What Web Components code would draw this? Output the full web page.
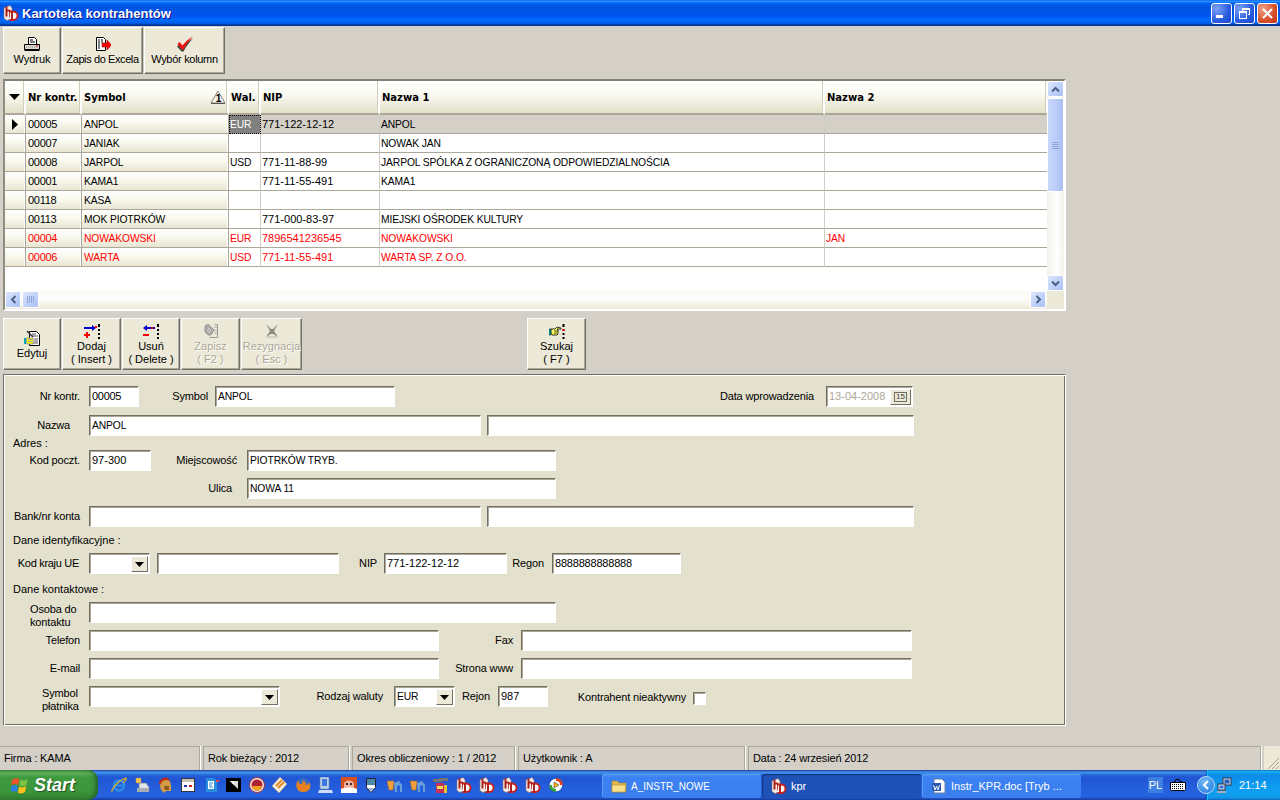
<!DOCTYPE html>
<html lang="pl">
<head>
<meta charset="utf-8">
<title>Kartoteka kontrahentów</title>
<style>
  html, body { margin: 0; height: 100%; overflow: hidden; }
  body { background: #D4D0C8; font: 11px "Liberation Sans", "DejaVu Sans", sans-serif; color: #000; }
</style>
</head>
<body>
<app-window></app-window>
<script>
/* Icons: small inline SVG, keyed by name */
const logo = `<path d="M1 3l6-2.500 2 2.500v10l-5 2.500-3-2z" fill="#f6ece6" stroke="#9a7a70" stroke-width=".6"/><path d="M3.500 1.500v10M3.500 6.500c2-2 3.500-1 3.500 1v5" stroke="#a81c14" stroke-width="1.900" fill="none"/><path d="M7 6.500h3c6 0 6 8.500 0 8.500H6.500" stroke="#cc2018" stroke-width="1.900" fill="#fff"/><path d="M9 6.500V15" stroke="#a81c14" stroke-width="1.900"/>`;
const dots = (x) => `<path d="M${x} 1v3M${x} 6v2M${x} 10v2M${x} 14v2" stroke="#000" stroke-width="2"/>`;
const ICONS = {
  logo,
  printer: `<path d="M4.500 1.500h6l2 2v5h-8z" fill="#fff" stroke="#000"/><path d="M6 4h3M6 6h5" stroke="#000"/><path d="M.5 8.500h15v5H.5z" fill="#d8d8d0" stroke="#000"/><path d="M2 11h12" stroke="#888" stroke-dasharray="1 1"/><path d="M.5 14.500h15" stroke="#000"/><rect x="12" y="9.500" width="2" height="1" fill="#e00"/>`,
  excel: `<path d="M1.500 1.500h7l2 2v11h-9z" fill="#fff" stroke="#000"/><path d="M3 4h2M6 4h2M3 6h2M6 6h2M3 8h2M3 10h2M3 12h2" stroke="#000"/><path d="M7 7h5V4l4.500 5-4.500 5v-3H7z" fill="#f00" stroke="#800" stroke-width=".5"/>`,
  check: `<path d="M0 9l2-2 3 3.500C8 6 12 3 16 1c-3.500 3.500-7 8-9.500 13H4.500z" fill="#000" opacity=".7" transform="translate(0 1.500)"/><path d="M.5 8L2.500 6 5.500 9.500C8.500 5.500 12 2.500 16 .5c-3.500 3.500-7 8-9.500 13H5z" fill="#f01010"/>`,
  edit: `<path d="M5.500 1.500h7l3 3v11h-10z" fill="#fff" stroke="#000"/><path d="M8 4h4M8 6h6M10 9h4M10 11h4M8 13h6" stroke="#555"/><path d="M3 1l6 6" stroke="#333" stroke-width="1.500"/><path d="M2 8h7v6H3z" fill="#ff0" stroke="#888" stroke-width=".8"/><path d="M1 8v6" stroke="#00a8c0" stroke-width="2"/><path d="M4 9.500h4M4 11.500h4" stroke="#999"/>`,
  add: `<path d="M0 5h9" stroke="#00c" stroke-width="2"/><path d="M8 2l4 3-4 3z" fill="#00c"/><path d="M3 9v6M0 12h6" stroke="#f00" stroke-width="2"/><rect x="11" y="3" width="2" height="2" fill="#f00"/>${dots(15)}`,
  del: `<path d="M3 5h9" stroke="#00c" stroke-width="2"/><path d="M4 2L0 5l4 3z" fill="#00c"/><path d="M0 12h6" stroke="#f00" stroke-width="2"/><rect x="8" y="4" width="2" height="2" fill="#f00"/>${dots(15)}`,
  save: `<path d="M11.500 1.500h3v13h-8" fill="none" stroke="#999"/><path d="M2 3l3-2 6 6-3 5H5L2 9z" fill="#aaa" stroke="#777" stroke-width=".6"/><path d="M5 5l3 3M4 7l3 3" stroke="#e0e0e0"/><path d="M11 4h3M11 7h3M11 10h3" stroke="#aaa"/>`,
  cancel: `<path d="M2 1l5 5h2l5-5-4 7 4 6-5-3H7l-5 3 4-6z" fill="#8e8c80"/><path d="M3 14h10" stroke="#bbb"/>`,
  find: `<path d="M0 6h2v6H0z" fill="#00c8d0" stroke="#000" stroke-width=".5"/><path d="M2 6h4l2-2 4 1v1H8l1 1v4l-1 1H3l-1-2z" fill="#ffff60" stroke="#000" stroke-width=".8"/><path d="M5 8h4M5 10h3" stroke="#000" stroke-width=".7"/>${dots(14.500)}<rect x="13.500" y="6" width="2" height="2" fill="#e00"/>`,
  winflag: `<path d="M1 3c2-1.500 4-1.500 6-.5L6 7.500C4 6.500 2 6.500 0 8z" fill="#e8562a"/><path d="M8 3c2 1 4 1 6-.5l-1 5c-2 1.500-4 1.500-6 .5z" fill="#7dc242"/><path d="M0 9c2-1.500 4-1.500 5.800-.5l-1 5c-2-1-4-1-5.800.5z" fill="#2d7fe0"/><path d="M6.800 9c2 1 4 1 6-.5l-1 5c-2 1.500-4 1.500-6 .5z" fill="#fbc31a"/>`,
  ie: `<circle cx="8" cy="8.500" r="5" fill="none" stroke="#2f8fe8" stroke-width="2.400"/><path d="M4 8.500h9" stroke="#2f8fe8" stroke-width="1.800"/><path d="M1 15C0 12 8 3 15 1c1 2-2 4-3 5" fill="none" stroke="#e8b41e" stroke-width="1.200"/>`,
  prn2: `<path d="M2 1h5v5H2z" fill="#f6c64a" stroke="#a87" stroke-width=".5"/><path d="M5 6h7l3 4v4H5z" fill="#dfe3ea" stroke="#778" stroke-width=".7"/><path d="M3 11h12v4H3z" fill="#a8adb8"/>`,
  helmet: `<path d="M3 9c0-5 3-7 6-7s5 3 5 7v5H9l-2 2-3-3z" fill="#d49a44"/><path d="M2 6C3 1 8 0 11 1l2 3C9 2 5 3 3 8z" fill="#c22a10"/><path d="M7 9h5v4H8z" fill="#8a5a20"/>`,
  win: `<rect x="1.500" y="1.500" width="13" height="13" fill="#fff" stroke="#334"/><rect x="2" y="2" width="12" height="3" fill="#c8c4b4"/><rect x="4" y="8" width="3" height="2" fill="#23a"/><rect x="9" y="8" width="3" height="2" fill="#c22"/>`,
  blue: `<path d="M3 1h8l3 3v11H3z" fill="#2b8fe0"/><path d="M5 4h6v8H5z" fill="#fff"/><path d="M6 6h4M6 8h3M6 10h4" stroke="#2b8fe0"/><rect x="13" y="3" width="3" height="2" fill="#e44"/>`,
  black: `<rect x="0" y="1" width="15" height="14" fill="#000"/><path d="M4 4h8v8z" fill="#ddd"/><path d="M4 4h4v4z" fill="#fff"/>`,
  disc: `<circle cx="8" cy="8" r="7.500" fill="#f2e6e6" stroke="#a33"/><circle cx="8" cy="8" r="5.500" fill="#b02030"/><path d="M3 9h10c0 3-2 4.500-5 4.500S3 12 3 9z" fill="#f0a020"/>`,
  diamond: `<path d="M8 0l7 7-8 9-7-7z" fill="#f4f0e0" stroke="#a87" stroke-width=".6"/><path d="M4 9l6-6M6 11l6-6" stroke="#e08a20" stroke-width="2"/>`,
  fox: `<circle cx="8" cy="8" r="7" fill="#3a6cc0"/><path d="M3 3c-3 5-2 12 5 12s9-6 6-10c0 2-1 3-3 3 0-3-2-5-4-4 1 1 1 3-1 3S3 5 3 3z" fill="#e8801e"/>`,
  pc: `<rect x="2" y="0" width="9" height="12" rx="1" fill="#bcd0ec" stroke="#6a88b0" stroke-width=".6"/><rect x="4" y="2" width="5" height="7" fill="#3a7ae0"/><path d="M1 13h13l1 3H0z" fill="#d0dcf0"/>`,
  toon: `<rect x="0" y="0" width="16" height="16" fill="#d8501c"/><path d="M3 7c0-4 9-5 10 0v5H3z" fill="#f0b0a0"/><path d="M0 12c4-2 12-2 16 0v4H0z" fill="#fff"/><circle cx="6" cy="7" r="1" fill="#000"/><circle cx="10" cy="7" r="1" fill="#000"/>`,
  shield: `<path d="M2.500 1.500h9v9l-4.500 5-4.500-5z" fill="#fff" stroke="#223"/><path d="M3 2h8v6H3z" fill="#4a8aa8"/><path d="M4 11h6l-3 3z" fill="#8ad"/>`,
  cups: `<path d="M0 4h7l-1 9H2z" fill="#f0a040" stroke="#a60" stroke-width=".5"/><path d="M7 6c3-2 7-1 8 2v7h-2V9c-1-1-2-1-3 0v6H8z" fill="#6aa0d8"/><path d="M10 4h3l-1 2z" fill="#6aa0d8"/>`,
  tools: `<rect x="3" y="6" width="8" height="10" fill="#c83058"/><rect x="4" y="9" width="6" height="3" fill="#f2dc60"/><path d="M0 2h9v3H0zM6 1h9v3H6z" fill="#777"/><rect x="11" y="8" width="3" height="8" fill="#e6c030"/>`,
  wmp: `<circle cx="8" cy="8" r="7" fill="#fff" stroke="#1a5ac0" stroke-width="1.400"/><path d="M8 1a7 7 0 0 1 7 7h-3a4 4 0 0 0-4-4z" fill="#e04020"/><path d="M1 8a7 7 0 0 0 7 7v-3a4 4 0 0 1-4-4z" fill="#38a038"/><path d="M6 5l5 3-5 3z" fill="#f0b020" stroke="#333" stroke-width=".5"/>`,
  folder: `<path d="M1 3h5l2 2h7v9H1z" fill="#e4b84a" stroke="#a68430" stroke-width=".6"/><path d="M1 7h14l-1 7H1z" fill="#f8e08c" stroke="#b08c30" stroke-width=".6"/>`,
  word: `<path d="M3 1h8l3 3v11H3z" fill="#fff" stroke="#6a7ea8"/><rect x="1" y="5" width="9" height="8" fill="#2a5ab0"/><path d="M2.500 7l1.500 5 1.500-4 1.500 4 1.500-5" stroke="#fff" fill="none" stroke-width=".9"/>`,
  keyboard: `<path d="M.5 5.500h15v7a1 1 0 0 1-1 1h-13a1 1 0 0 1-1-1z" fill="#fff" stroke="#000"/><path d="M2 7.500h12M2 9.500h12M2 11.500h12" stroke="#000" stroke-dasharray="1 1"/><path d="M4 4.500h1l1-2h3l1 2h2" fill="none" stroke="#000"/>`,
  net: `<rect x="6" y="1" width="8" height="7" fill="#cfe0f8" stroke="#334"/><rect x="7.500" y="2.500" width="5" height="4" fill="#2c5cb8"/><rect x="1" y="7" width="7" height="6" fill="#dbe8fa" stroke="#334"/><rect x="2.500" y="8.500" width="4" height="3" fill="#3a70d0"/><path d="M0 14h9v2H0z" fill="#aab"/>`
};

class XIcon extends HTMLElement {
  connectedCallback() {
    const size = this.getAttribute('size') || 16;
    this.attachShadow({ mode: 'open' }).innerHTML = `
      <style>:host { display: block; width: ${size}px; height: ${size}px; flex: none; } svg { display: block; }</style>
      <svg width="${size}" height="${size}" viewBox="0 0 16 16">${ICONS[this.getAttribute('name')] || ''}</svg>`;
  }
}

class TitleBar extends HTMLElement {
  connectedCallback() {
    this.attachShadow({ mode: 'open' }).innerHTML = `
      <style>
        :host { display: flex; align-items: center; height: 26px; flex: none; padding-left: 3px; box-sizing: border-box;
          background: linear-gradient(#0058EE 0%, #3593FF 4%, #288EFF 6%, #127DFF 8%, #036FFC 10%, #0262EE 14%, #0057E5 20%, #0054E3 24%, #0055EB 56%, #005BF5 66%, #026AFE 76%, #0062EF 86%, #0052D6 92%, #0040AB 94%, #003092 100%); }
        .t { margin-left: 3px; color: #fff; font: bold 13px "Liberation Sans", sans-serif; text-shadow: 1px 1px #0f1089; flex: 1; }
        .b { width: 21px; height: 21px; box-sizing: border-box; border: 1px solid #fff; border-radius: 3px; margin-right: 2px;
          background: radial-gradient(circle at 25% 25%, #7ea2f4, #2a5ce0 60%, #1c46c8); display: flex; align-items: center; justify-content: center; }
        .x { background: radial-gradient(circle at 25% 25%, #f0a088, #d8502a 60%, #c03810); margin-right: 2px; }
      </style>
      <x-icon name="logo"></x-icon>
      <span class="t"><slot></slot></span>
      <span class="b"><svg width="13" height="13" shape-rendering="crispEdges"><rect x="1" y="8" width="7" height="3" fill="#fff"/></svg></span>
      <span class="b"><svg width="13" height="13" fill="none" stroke="#fff" shape-rendering="crispEdges"><path d="M4.500 3.500V1.500h7v6h-2"/><path d="M1.500 4.500h7v7h-7z"/><path d="M1 5h8M4 2h8"/></svg></span>
      <span class="b x"><svg width="13" height="13" stroke="#fff" stroke-width="2"><path d="M2 2l9 9M11 2l-9 9"/></svg></span>`;
  }
}

class XpButton extends HTMLElement {
  connectedCallback() {
    const disabled = this.hasAttribute('disabled');
    const lines = (this.getAttribute('label') || '').split('|').map(l => `<span>${l}</span>`).join('');
    this.attachShadow({ mode: 'open' }).innerHTML = `
      <style>
        :host { display: flex; flex-direction: column; align-items: center; box-sizing: border-box; flex: none;
          background: #ECE9D8; border: 1px solid; border-color: #fff #716F64 #716F64 #fff;
          box-shadow: inset -1px -1px #ACA899; padding-top: var(--pad-top, 8px); }
        .l { display: flex; flex-direction: column; align-items: center; line-height: 13px; white-space: nowrap; margin-top: var(--label-gap, 1px);
          color: ${disabled ? '#ACA899' : '#000'}; ${disabled ? 'text-shadow: 1px 1px #fff;' : ''} }
      </style>
      <x-icon name="${this.getAttribute('icon')}"></x-icon>
      <div class="l">${lines}</div>`;
  }
}

/* Data grid with the fixed columns on the left and XP scroll bars */
const GRID_COLS = ['Nr kontr.', 'Symbol', 'Wal.', 'NIP', 'Nazwa 1', 'Nazwa 2'];
const GRID_ROWS = [
  ['00005', 'ANPOL', 'EUR', '771-122-12-12', 'ANPOL', ''],
  ['00007', 'JANIAK', '', '', 'NOWAK JAN', ''],
  ['00008', 'JARPOL', 'USD', '771-11-88-99', 'JARPOL SPÓLKA Z OGRANICZONĄ ODPOWIEDZIALNOŚCIA', ''],
  ['00001', 'KAMA1', '', '771-11-55-491', 'KAMA1', ''],
  ['00118', 'KASA', '', '', '', ''],
  ['00113', 'MOK PIOTRKÓW', '', '771-000-83-97', 'MIEJSKI OŚRODEK KULTURY', ''],
  ['00004', 'NOWAKOWSKI', 'EUR', '7896541236545', 'NOWAKOWSKI', 'JAN'],
  ['00006', 'WARTA', 'USD', '771-11-55-491', 'WARTA SP. Z O.O.', '']
];
const RED_FROM = 6;

class DataGrid extends HTMLElement {
  connectedCallback() {
    const head = GRID_COLS.map((t, i) => `<div class="h">${t}${i === 1 ? `<svg class="sort" width="16" height="15" viewBox="0 0 16 15"><path d="M8 1L1 13h14z" fill="#f4f2e6" stroke="#888"/><path d="M1 13.500h14" stroke="#555"/><text x="8.500" y="12" text-anchor="middle" font-size="10" font-weight="bold" font-family="Liberation Sans">1</text></svg>` : ''}</div>`).join('');
    const rows = GRID_ROWS.map((r, ri) => {
      const cls = (ri === 0 ? ' sel' : '') + (ri >= RED_FROM ? ' red' : '');
      const ind = `<div class="c fix ind">${ri === 0 ? '<svg width="8" height="11"><path d="M1 0l6 5.500L1 11z"/></svg>' : ''}</div>`;
      return ind + r.map((v, i) => {
        const kind = i === 0 ? ' fix num' : i === 1 ? ' fix caps' : i === 3 ? '' : ' caps';
        return `<div class="c${kind}${cls}${ri === 0 && i === 2 ? ' cur' : ''}">${v}</div>`;
      }).join('');
    }).join('');
    this.attachShadow({ mode: 'open' }).innerHTML = `
      <style>
        :host { display: grid; grid-template-columns: 1fr 17px; grid-template-rows: 1fr 18px; box-sizing: border-box; height: 232px; width: 1063px; margin-left: 3px; flex: none;
          background: #fff; border: 2px solid; border-color: #808070 #fff #fff #908E80; }
        .g { display: grid; grid-template-columns: 21px 56px 147px 32px 119px 445px 223px; grid-auto-rows: 19px; grid-template-rows: 34px; align-content: start; overflow: hidden; }
        .h { background: linear-gradient(#fff, #FBFBF3 40%, #E3E0C8); border-right: 2px solid #FFFFFF; border-bottom: 2px solid #ACA899; box-sizing: border-box; font: bold 10px "DejaVu Sans", sans-serif; display: flex; align-items: center; padding-left: 2px; position: relative; box-shadow: inset -1px 0 #D0CDB8; }
        .h.ind { justify-content: center; padding: 0; }
        .sort { position: absolute; right: 1px; top: 9px; }
        .c { box-sizing: border-box; border-right: 1px solid #D0CEC4; border-bottom: 1px solid #ACA899; padding: 0 0 0 1px; line-height: 18px; white-space: nowrap; overflow: hidden; background: #fff; }
        .c.caps { font-size: 10.300px; letter-spacing: -.1px; line-height: 20px; }
        .c.num { letter-spacing: -.3px; }
        .c.fix { background: linear-gradient(#fff, #FAFAF0 40%, #E8E5D2); border-right: 1px solid #ACA899; box-shadow: inset -1px 0 #fff; padding-left: 2px; }
        .ind { display: flex; align-items: center; justify-content: center; padding: 0 !important; }
        .c.sel:not(.fix) { background: #D4D0C8; }
        .c.red { color: #f00; }
        .c.cur { background: #808080 !important; color: #fff; outline: 1px dotted #000; outline-offset: -1px; padding-left: 1px; }
        .vb { background: linear-gradient(90deg, #F3F1E8, #fff 60%, #F3F1E8); display: flex; flex-direction: column; }
        .hb { background: linear-gradient(#FAF9F3, #fff 40%, #ECE9D8); display: flex; justify-content: space-between; padding-right: 1px; }
        .corner { background: #ECE9D8; }
        .ar, .th { box-sizing: border-box; border: 1px solid #fff; border-radius: 2px; background: linear-gradient(135deg, #DCE6FC, #B9CCF9 70%, #A9BEF0); display: flex; align-items: center; justify-content: center; flex: none; }
        .vb .ar { width: 17px; height: 16px; }
        .vb .th { width: 17px; height: 94px; margin-top: 1px; background: linear-gradient(90deg, #C8D6FA, #BCCEFA 50%, #A9BEF0); }
        .vb .sp { flex: 1; }
        .hb .ar { width: 16px; height: 17px; }
        .hb .left { display: flex; }
        .hb .th { width: 17px; height: 17px; margin-left: 1px; }
        svg.a { fill: none; stroke: #4D6185; stroke-width: 2; }
      </style>
      <div class="g">
        <div class="h ind"><svg width="11" height="6"><path d="M0 0h11L5.500 6z"/></svg></div>${head}${rows}
      </div>
      <div class="vb">
        <div class="ar"><svg class="a" width="9" height="7"><path d="M1 5.500l3.500-3.500 3.500 3.500"/></svg></div>
        <div class="th"><svg width="7" height="7" stroke="#8FA5DC"><path d="M0 .5h7M0 2.500h7M0 4.500h7M0 6.500h7"/></svg></div>
        <div class="sp"></div>
        <div class="ar"><svg class="a" width="9" height="7"><path d="M1 1.500l3.500 3.500 3.500-3.500"/></svg></div>
      </div>
      <div class="hb">
        <div class="left">
          <div class="ar"><svg class="a" width="7" height="9"><path d="M5.500 1L2 4.500 5.500 8"/></svg></div>
          <div class="th"><svg width="7" height="7" stroke="#8FA5DC"><path d="M.5 0v7M2.500 0v7M4.500 0v7M6.500 0v7"/></svg></div>
        </div>
        <div class="ar"><svg class="a" width="7" height="9"><path d="M1.500 1L5 4.500 1.500 8"/></svg></div>
      </div>
      <div class="corner"></div>`;
  }
}

/* Form controls */
class FormRow extends HTMLElement {
  connectedCallback() {
    this.attachShadow({ mode: 'open' }).innerHTML = `
      <style>:host { display: flex; align-items: center; height: 21px; flex: none; } </style><slot></slot>`;
  }
}

class FormHeading extends HTMLElement {
  connectedCallback() {
    this.attachShadow({ mode: 'open' }).innerHTML = `
      <style>:host { display: flex; align-items: center; padding-left: 8px; flex: none; box-sizing: border-box; } </style><slot></slot>`;
  }
}

class FormLabel extends HTMLElement {
  connectedCallback() {
    this.attachShadow({ mode: 'open' }).innerHTML = `
      <style>:host { display: block; text-align: right; line-height: 13px; flex: none; letter-spacing: -.15px; }</style><slot></slot>`;
  }
}

class FormInput extends HTMLElement {
  connectedCallback() {
    const dis = this.hasAttribute('disabled');
    this.attachShadow({ mode: 'open' }).innerHTML = `
      <style>
        :host { display: block; height: 21px; box-sizing: border-box; flex: none; background: #fff; color: ${dis ? '#ACA899' : '#000'};
          border: 1px solid; border-color: #716F64 #fff #fff #716F64; box-shadow: inset 1px 1px #ACA899; padding: 1px 0 0 2px; line-height: 16px; white-space: nowrap; overflow: hidden; }
        :host([caps]) { font-size: 10.300px; letter-spacing: -.1px; line-height: 18px; }
      </style><slot></slot>`;
  }
}

class FormCombo extends HTMLElement {
  connectedCallback() {
    this.attachShadow({ mode: 'open' }).innerHTML = `
      <style>
        :host { display: flex; height: 21px; box-sizing: border-box; flex: none; background: #fff;
          border: 1px solid; border-color: #716F64 #fff #fff #716F64; box-shadow: inset 1px 1px #ACA899; line-height: 17px; }
        :host([caps]) { font-size: 10.300px; letter-spacing: -.1px; line-height: 18px; }
        .v { flex: 1; padding: 1px 0 0 2px; }
        .b { width: 17px; margin: 2px 1px 1px 0; box-sizing: border-box; background: #ECE9D8; border: 1px solid; border-color: #fff #716F64 #716F64 #fff; display: flex; align-items: center; justify-content: center; }
        .b.cal { width: 21px; font: 8px "Liberation Sans", sans-serif; }
        .cal span { border: 1px solid #716F64; padding: 0 1px; line-height: 8px; color: #444; }
      </style>
      <div class="v"><slot></slot></div>
      ${this.hasAttribute('cal')
        ? '<div class="b cal"><span>15</span></div>'
        : '<div class="b"><svg width="9" height="5"><path d="M0 0h9L4.500 5z"/></svg></div>'}`;
  }
}

class FormPanel extends HTMLElement {
  connectedCallback() {
    this.attachShadow({ mode: 'open' }).innerHTML = `
      <style>
        :host { display: flex; flex-direction: column; box-sizing: border-box; width: 1063px; height: 352px; margin-left: 3px; flex: none; background: #E3E0CD;
          border: 1px solid; border-color: #716F64 #fff #fff #716F64; padding: 11px 0 0 1px; box-shadow: inset 1px 1px #fff, inset -1px -1px #716F64; }
      </style><slot></slot>`;
  }
}

class StatusBar extends HTMLElement {
  connectedCallback() {
    this.attachShadow({ mode: 'open' }).innerHTML = `
      <style>
        :host { display: flex; height: 25px; flex: none; box-sizing: border-box; letter-spacing: -.15px; }
        .g { width: 16px; flex: none; align-self: flex-end; height: 24px; background: #ECE9D8; display: flex; align-items: flex-end; justify-content: flex-end; }
      </style><slot></slot>
      <div class="g"><svg width="13" height="13" stroke="#A7A493"><path d="M12 1L1 12M12 5L5 12M12 9L9 12"/></svg></div>`;
  }
}

class StatusPane extends HTMLElement {
  connectedCallback() {
    this.attachShadow({ mode: 'open' }).innerHTML = `
      <style>
        :host { display: flex; align-items: center; box-sizing: border-box; height: 24px; margin-top: 1px; padding: 0 0 1px 4px; flex: none;
          border-top: 1px solid #ACA899; border-left: 1px solid #ACA899; border-right: 1px solid #ACA899; box-shadow: 1px 0 #fff; margin-right: 3px; white-space: nowrap; }
        :host([first]) { border-left: 0; }
      </style><slot></slot>`;
  }
}

class TaskButton extends HTMLElement {
  connectedCallback() {
    const active = this.hasAttribute('active');
    this.attachShadow({ mode: 'open' }).innerHTML = `
      <style>
        :host { display: flex; align-items: center; gap: 4px; width: 159px; height: 24px; box-sizing: border-box; margin-right: 1px; padding-left: 9px; border-radius: 3px; flex: none;
          color: #fff; white-space: nowrap; overflow: hidden; font-size: 11px;
          background: ${active ? 'linear-gradient(#1B4BB0, #1E52B7 15%, #1E52B7)' : 'linear-gradient(#4A90F0, #3C81F3 15%, #3B7EEC)'};
          ${active ? 'box-shadow: inset 1px 1px 1px #10347c;' : 'box-shadow: inset 1px 1px #5c9df5;'} }
      </style>
      <x-icon name="${this.getAttribute('icon')}"></x-icon><span><slot></slot></span>`;
  }
}

class TaskBar extends HTMLElement {
  connectedCallback() {
    const quick = ['ie', 'prn2', 'helmet', 'win', 'blue', 'black', 'disc', 'diamond', 'fox', 'pc', 'toon', 'shield', 'cups', 'cups', 'tools', 'logo', 'logo', 'logo', 'logo', 'wmp'];
    this.attachShadow({ mode: 'open' }).innerHTML = `
      <style>
        :host { display: flex; align-items: center; height: 30px; flex: none; color: #fff;
          background: linear-gradient(#1F2F86 0, #3165C4 3%, #3682E5 6%, #4490E6 10%, #3883E5 12%, #2B71E0 15%, #2663DA 18%, #235BD6 20%, #2258D5 23%, #2157D6 38%, #245DDB 54%, #2562DF 86%, #245FDC 89%, #2158D4 92%, #1D4EC0 95%, #1941A5 98%); }
        .start { width: 98px; height: 30px; flex: none; box-sizing: border-box; display: flex; align-items: center; gap: 4px; padding-left: 11px; border-radius: 0 10px 10px 0;
          background: linear-gradient(#3F8F3F, #5DAE5B 10%, #3E9A3E 25%, #3C963C 70%, #2F7F2F); box-shadow: inset -4px 0 5px -2px #1F5A1F;
          font: italic bold 18px "Liberation Sans", sans-serif; text-shadow: 1px 1px 1px #1F4F1F; }
        .quick { display: flex; gap: 7px; width: 491px; margin-left: 13px; flex: none; }
        .btns { display: flex; margin-top: 1px; }
        .lang { margin-left: 66px; width: 15px; height: 16px; background: #3C7FE0; text-align: center; line-height: 16px; font-size: 11px; flex: none; }
        .tray { margin-left: 7px; display: flex; align-items: center; flex: 1; height: 30px; }
        .chev { width: 18px; height: 18px; border-radius: 50%; box-sizing: border-box; border: 1px solid #BFDDF8; background: radial-gradient(circle at 40% 30%, #6FB8F4, #1C78DC); margin-left: 11px; display: flex; align-items: center; justify-content: center; flex: none; z-index: 1; }
        .clock { display: flex; align-items: center; height: 30px; flex: 1; margin-left: -9px; padding-left: 10px; border-left: 1px solid #095BC9; box-shadow: inset 1px 0 #1CC0F0;
          background: linear-gradient(#0C59B9 0, #139EE9 3%, #18B5F2 6%, #139BEB 10%, #1290E8 14%, #0D8DEA 20%, #0D9FF1 60%, #0F9EED 85%, #119BE9 90%, #1291E0 94%, #0963C1 100%); gap: 6px; font-size: 11px; }
      </style>
      <div class="start"><x-icon name="winflag" size="19"></x-icon><span>Start</span></div>
      <div class="quick">${quick.map(n => `<x-icon name="${n}"></x-icon>`).join('')}</div>
      <div class="btns"><slot></slot></div>
      <div class="lang">PL</div>
      <div class="tray">
        <x-icon name="keyboard"></x-icon>
        <div class="chev"><svg width="8" height="10" fill="none" stroke="#fff" stroke-width="2"><path d="M6 1L2 5l4 4"/></svg></div>
        <div class="clock"><x-icon name="net"></x-icon><span>21:14</span></div>
      </div>`;
  }
}

/* Top level window: everything below is plain flow inside one column */
class AppWindow extends HTMLElement {
  connectedCallback() {
    this.attachShadow({ mode: 'open' }).innerHTML = `
      <style>
        :host { display: flex; flex-direction: column; width: 1280px; height: 800px; }
        .bar { display: flex; flex: none; margin-left: 3px; }
        .top { margin-top: 1px; height: 47px; }
        .top xp-button { --pad-top: 8px; height: 47px; margin-right: 1px; }
        .mid { margin-top: 7px; height: 52px; }
        .mid xp-button { height: 52px; margin-right: 1px; --pad-top: 4px; --label-gap: 1px; }
        .grow { flex: 1; }
        form-heading { height: 14px; }
      </style>
      <title-bar>Kartoteka kontrahentów</title-bar>
      <div class="bar top" style="margin-bottom:5px">
        <xp-button icon="printer" label="Wydruk" style="width:58px"></xp-button>
        <xp-button icon="excel" label="Zapis do Excela" style="width:81px;letter-spacing:-.4px"></xp-button>
        <xp-button icon="check" label="Wybór kolumn" style="width:81px;letter-spacing:-.3px"></xp-button>
      </div>
      <data-grid></data-grid>
      <div class="bar mid" style="margin-bottom:4px">
        <xp-button icon="edit" label="Edytuj" style="width:58px;--pad-top:11px"></xp-button>
        <xp-button icon="add" label="Dodaj|( Insert )" style="width:59px"></xp-button>
        <xp-button icon="del" label="Usuń|( Delete )" style="width:58px"></xp-button>
        <xp-button icon="save" label="Zapisz|( F2 )" disabled style="width:59px"></xp-button>
        <xp-button icon="cancel" label="Rezygnacja|( Esc )" disabled style="width:61px"></xp-button>
        <xp-button icon="find" label="Szukaj|( F7 )" style="width:59px;margin-left:224px"></xp-button>
      </div>
      <form-panel>
        <form-row>
          <form-label style="width:75px">Nr kontr.</form-label>
          <form-input style="width:50px;margin-left:9px;letter-spacing:-.3px">00005</form-input>
          <form-label style="width:69px">Symbol</form-label>
          <form-input caps style="width:180px;margin-left:7px">ANPOL</form-input>
          <form-label style="width:419px">Data wprowadzenia</form-label>
          <form-combo cal style="width:87px;margin-left:12px;color:#ACA899">13-04-2008</form-combo>
        </form-row>
        <form-row style="margin-top:8px">
          <form-label style="width:65px">Nazwa</form-label>
          <form-input caps style="width:392px;margin-left:19px">ANPOL</form-input>
          <form-input style="width:427px;margin-left:6px"></form-input>
        </form-row>
        <form-heading>Adres :</form-heading>
        <form-row>
          <form-label style="width:75px">Kod poczt.</form-label>
          <form-input style="width:62px;margin-left:9px">97-300</form-input>
          <form-label style="width:86px">Miejscowość</form-label>
          <form-input caps style="width:309px;margin-left:10px">PIOTRKÓW TRYB.</form-input>
        </form-row>
        <form-row style="margin-top:7px">
          <form-label style="width:227px">Ulica</form-label>
          <form-input caps style="width:309px;margin-left:15px">NOWA 11</form-input>
        </form-row>
        <form-row style="margin-top:7px">
          <form-label style="width:75px">Bank/nr konta</form-label>
          <form-input style="width:392px;margin-left:9px"></form-input>
          <form-input style="width:427px;margin-left:6px"></form-input>
        </form-row>
        <form-heading style="height:26px">Dane identyfikacyjne :</form-heading>
        <form-row>
          <form-label style="width:74px;letter-spacing:-.3px">Kod kraju UE</form-label>
          <form-combo style="width:61px;margin-left:10px"></form-combo>
          <form-input style="width:182px;margin-left:7px"></form-input>
          <form-label style="width:38px">NIP</form-label>
          <form-input style="width:123px;margin-left:7px">771-122-12-12</form-input>
          <form-label style="width:37px">Regon</form-label>
          <form-input style="width:129px;margin-left:8px;letter-spacing:-.2px">8888888888888</form-input>
        </form-row>
        <form-heading style="height:28px;padding-top:2px">Dane kontaktowe :</form-heading>
        <form-row>
          <form-label style="width:50px;margin:6px 0 0 25px;text-align:left">Osoba do kontaktu</form-label>
          <form-input style="width:467px;margin-left:9px"></form-input>
        </form-row>
        <form-row style="margin-top:7px">
          <form-label style="width:75px">Telefon</form-label>
          <form-input style="width:350px;margin-left:9px"></form-input>
          <form-label style="width:74px">Fax</form-label>
          <form-input style="width:391px;margin-left:8px"></form-input>
        </form-row>
        <form-row style="margin-top:7px">
          <form-label style="width:75px">E-mail</form-label>
          <form-input style="width:350px;margin-left:9px"></form-input>
          <form-label style="width:74px">Strona www</form-label>
          <form-input style="width:391px;margin-left:8px"></form-input>
        </form-row>
        <form-row style="margin-top:7px">
          <form-label style="width:44px;margin:6px 0 0 37px;text-align:left">Symbol płatnika</form-label>
          <form-combo style="width:191px;margin-left:3px"></form-combo>
          <form-label style="width:103px">Rodzaj waluty</form-label>
          <form-combo caps style="width:61px;margin-left:11px">EUR</form-combo>
          <form-label style="width:35px">Rejon</form-label>
          <form-input style="width:50px;margin-left:8px">987</form-input>
          <form-label style="width:138px;margin-top:2px">Kontrahent nieaktywny</form-label>
          <form-input style="width:13px;height:13px;margin:4px 0 0 7px"></form-input>
        </form-row>
      </form-panel>
      <div class="grow"></div>
      <status-bar>
        <status-pane first style="width:200px">Firma : KAMA</status-pane>
        <status-pane style="width:146px">Rok bieżący : 2012</status-pane>
        <status-pane style="width:163px">Okres obliczeniowy : 1 / 2012</status-pane>
        <status-pane style="width:227px">Użytkownik : A</status-pane>
        <status-pane style="flex:1">Data : 24 wrzesień 2012</status-pane>
      </status-bar>
      <task-bar>
        <task-button icon="folder"><span style="font-size:10px">A_INSTR_NOWE</span></task-button>
        <task-button icon="logo" active>kpr</task-button>
        <task-button icon="word">Instr_KPR.doc [Tryb ...</task-button>
      </task-bar>`;
  }
}

customElements.define('x-icon', XIcon);
customElements.define('title-bar', TitleBar);
customElements.define('xp-button', XpButton);
customElements.define('data-grid', DataGrid);
customElements.define('form-row', FormRow);
customElements.define('form-heading', FormHeading);
customElements.define('form-label', FormLabel);
customElements.define('form-input', FormInput);
customElements.define('form-combo', FormCombo);
customElements.define('form-panel', FormPanel);
customElements.define('status-pane', StatusPane);
customElements.define('status-bar', StatusBar);
customElements.define('task-button', TaskButton);
customElements.define('task-bar', TaskBar);
customElements.define('app-window', AppWindow);
</script>
</body>
</html>
